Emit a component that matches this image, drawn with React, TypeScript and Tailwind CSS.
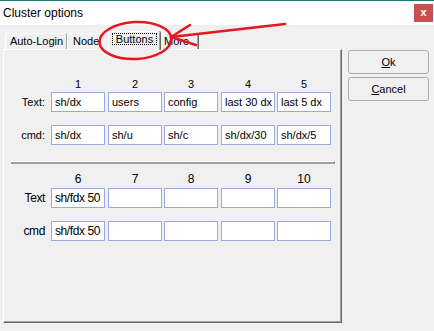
import React from "react";

const ML = ["ml-0", "ml-[3px]", "ml-[2px]", "ml-[3px]", "ml-[2px]"];

function Header({ nums, cls }: { nums: string[]; cls: string }) {
  return (
    <div className={`flex h-[14px] leading-[14px] ${cls}`}>
      <div className="w-[47px] shrink-0" />
      {nums.map((n, i) => (
        <div key={i} className={`w-[54px] shrink-0 text-center ${ML[i]}`}>
          {n}
        </div>
      ))}
    </div>
  );
}

function Row({ label, values, cls, narrow }: { label: string; values: string[]; cls: string; narrow?: boolean }) {
  return (
    <div className={`flex h-[20px] items-center ${cls}`}>
      <div className={`w-[47px] shrink-0 pr-[6px] text-right ${narrow ? "tracking-[-0.4px]" : ""}`}>{label}</div>
      {values.map((v, i) => (
        <div
          key={i}
          className={`w-[54px] h-[20px] shrink-0 bg-white border border-[#98a8e2] pl-[3px] flex items-center whitespace-nowrap overflow-hidden ${ML[i]} ${narrow ? "tracking-[-0.4px]" : ""}`}
        >
          {v}
        </div>
      ))}
    </div>
  );
}

export default function App() {
  return (
    <div
      className="relative w-[434px] h-[331px] overflow-hidden bg-[#f0f0f0] text-black text-[11px]"
      style={{ fontFamily: '"Liberation Sans", Arial, sans-serif' }}
    >
      {/* title bar */}
      <div className="h-[25px] bg-white border-t border-[#1f7a72] flex items-center justify-between">
        <div className="pl-[3px] text-[12px] text-black">Cluster options</div>
        <div className="w-[19px] h-[18px] mr-[1px] bg-[#c75050] flex items-center justify-center text-white font-bold text-[11px] leading-none pb-[2px]">
          x
        </div>
      </div>

      {/* body */}
      <div className="flex pl-[3px]">
        {/* left column */}
        <div className="flex flex-col">
          <div className="mt-[6px] h-[18px] flex items-end pl-[2px] text-[11px]">
            <div className="w-[62px] h-[16px] border-t border-l border-white shadow-[inset_-1px_0_0_#a0a0a0,1px_0_0_#696969] rounded-t-[2px] flex items-center justify-center">
              Auto-Login
            </div>
            <div className="w-[41px] h-[16px] border-t border-l border-white rounded-t-[2px] flex items-center pl-[5px] overflow-hidden whitespace-nowrap">
              Node
            </div>
            <div className="relative z-10 w-[52px] h-[19px] -mb-[1px] bg-[#f0f0f0] border-t border-l border-white shadow-[inset_-1px_0_0_#a0a0a0,1px_0_0_#696969] rounded-t-[2px] flex items-start justify-center pt-[1px]">
              <span className="border border-dotted border-black px-[3px] leading-[11px] h-[12px]">
                Buttons
              </span>
            </div>
            <div className="w-[38px] h-[16px] border-t border-white shadow-[inset_-1px_0_0_#a0a0a0,1px_0_0_#696969] rounded-t-[2px] flex items-center pl-[4px]">
              More
            </div>
          </div>

          <div className="w-[339px] h-[274px] border-t border-l border-white border-r border-b border-r-[#696969] border-b-[#696969] shadow-[inset_-1px_-1px_0_#a0a0a0] flex flex-col">
            <Header nums={["1", "2", "3", "4", "5"]} cls="mt-[27px]" />
            <Row label="Text:" values={["sh/dx", "users", "config", "last 30 dx", "last 5 dx"]} cls="mt-[1px]" />
            <Row label="cmd:" values={["sh/dx", "sh/u", "sh/c", "sh/dx/30", "sh/dx/5"]} cls="mt-[13px]" />
            <div className="ml-[7px] w-[324px] h-[3px] mt-[16px] border-t border-white border-b-2 border-b-[#a0a0a0] border-r border-r-[#808080]" />
            <div className="text-[12px]">
              <Header nums={["6", "7", "8", "9", "10"]} cls="mt-[8px]" />
              <Row label="Text" values={["sh/fdx 50", "", "", "", ""]} cls="mt-[2px]" narrow />
              <Row label="cmd" values={["sh/fdx 50", "", "", "", ""]} cls="mt-[13px]" narrow />
            </div>
          </div>
        </div>

        {/* right column */}
        <div className="ml-[6px] mt-[25px] flex flex-col gap-[3px]">
          <button className="w-[81px] h-[24px] rounded-[3px] border border-[#adadad] bg-[#f0f0f0] text-[11px] flex items-center justify-center">
            <span>
              <span className="underline">O</span>k
            </span>
          </button>
          <button className="w-[81px] h-[24px] rounded-[3px] border border-[#adadad] bg-[#f0f0f0] text-[11px] flex items-center justify-center">
            <span>
              <span className="underline">C</span>ancel
            </span>
          </button>
        </div>
      </div>

      {/* red annotation */}
      <svg className="absolute left-0 top-0 pointer-events-none" width="434" height="331" viewBox="0 0 434 331">
        <ellipse cx="135.5" cy="40.5" rx="36" ry="18.5" fill="none" stroke="#e8151f" strokeWidth="2.5" transform="rotate(-3 135.5 40.5)" />
        <line x1="285" y1="24" x2="171" y2="37" stroke="#e8151f" strokeWidth="2.5" strokeLinecap="round" />
        <line x1="190" y1="25" x2="171" y2="37" stroke="#e8151f" strokeWidth="2.5" strokeLinecap="round" />
        <line x1="171" y1="37" x2="196" y2="45" stroke="#e8151f" strokeWidth="2.5" strokeLinecap="round" />
      </svg>
    </div>
  );
}
